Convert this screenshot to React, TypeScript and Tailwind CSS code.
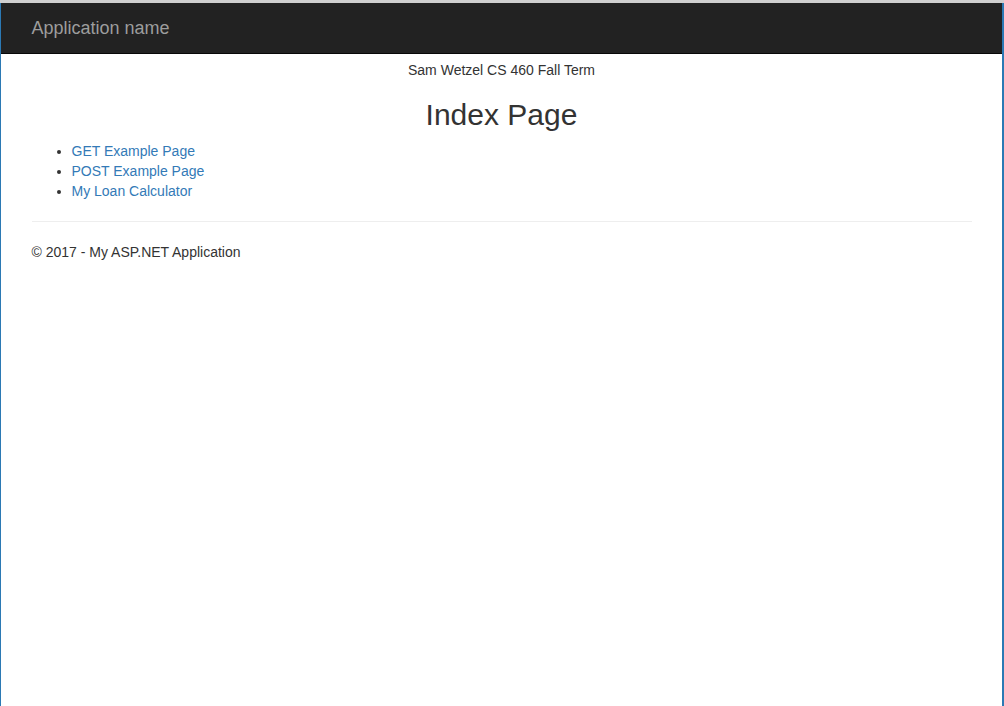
export default function App() {
  return (
    <div
      className="min-h-[706px] w-[1004px] bg-white text-[14px] leading-[20px] text-[#333]"
      style={{ fontFamily: '"Liberation Sans", Arial, sans-serif' }}
    >
      <div className="h-[3px] bg-[#d0d0d0]" />
      <div className="flex min-h-[703px] flex-col border-l border-r-2 border-[#2b79b4]">
        <nav className="h-[51px] border-b border-[#080808] bg-[#222]">
          <div className="mx-auto w-[970px] px-[15px]">
            <span className="block h-[50px] text-[18px] leading-[50px] text-[#9d9d9d]">Application name</span>
          </div>
        </nav>
        <div className="mx-auto w-[970px] px-[15px]">
          <div className="mt-[6px] text-center">Sam Wetzel CS 460 Fall Term</div>
          <h2 className="mt-[18px] mb-[10px] text-center text-[30px] leading-[33px] font-medium">Index Page</h2>
          <ul className="mb-[10px] list-disc pl-[40px]">
            <li><a className="text-[#337ab7]" href="#">GET Example Page</a></li>
            <li><a className="text-[#337ab7]" href="#">POST Example Page</a></li>
            <li><a className="text-[#337ab7]" href="#">My Loan Calculator</a></li>
          </ul>
          <hr className="mt-[20px] mb-[20px] border-t border-[#eee]" />
          <footer>
            <p>© 2017 - My ASP.NET Application</p>
          </footer>
        </div>
      </div>
    </div>
  );
}
